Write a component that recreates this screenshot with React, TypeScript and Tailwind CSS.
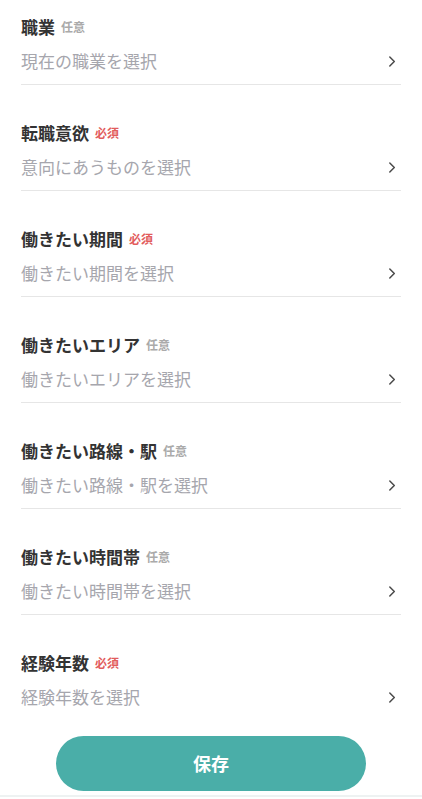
import React from "react";

type Field = {
  label: string;
  required: boolean;
  placeholder: string;
};

const fields: Field[] = [
  { label: "職業", required: false, placeholder: "現在の職業を選択" },
  { label: "転職意欲", required: true, placeholder: "意向にあうものを選択" },
  { label: "働きたい期間", required: true, placeholder: "働きたい期間を選択" },
  { label: "働きたいエリア", required: false, placeholder: "働きたいエリアを選択" },
  { label: "働きたい路線・駅", required: false, placeholder: "働きたい路線・駅を選択" },
  { label: "働きたい時間帯", required: false, placeholder: "働きたい時間帯を選択" },
  { label: "経験年数", required: true, placeholder: "経験年数を選択" },
];

const Chevron = () => (
  <svg width="8" height="13" viewBox="0 0 8 13" fill="none" className="shrink-0">
    <path d="M1.8 2L6.3 6.5L1.8 11" stroke="#4a4a4a" strokeWidth="1.5" strokeLinecap="round" strokeLinejoin="round" />
  </svg>
);

const App: React.FC = () => {
  return (
    <div
      className="min-h-[799px] w-full bg-white flex flex-col"
      style={{ fontFamily: '"Noto Sans CJK JP", "Noto Sans", sans-serif' }}
    >
      <div className="flex flex-col px-[21px]">
        {fields.map((f, idx) => (
          <div
            key={f.label}
            className={`flex flex-col ${idx === 0 ? "pt-[15px]" : "pt-[36px]"} pb-[11px] ${
              idx === fields.length - 1 ? "" : "border-b border-[#e6e6e6]"
            }`}
          >
            <div className="flex items-center gap-[6px] h-[24px]">
              <span className="text-[17px] font-bold text-[#333333] leading-[24px]">{f.label}</span>
              <span
                className={`text-[12px] font-bold leading-[24px] ${
                  f.required ? "text-[#e25c5c]" : "text-[#aaaaaa]"
                }`}
              >
                {f.required ? "必須" : "任意"}
              </span>
            </div>
            <div className="flex items-center justify-between h-[24px] mt-[10px] pr-[5px]">
              <span className="text-[17px] text-[#a6a6ad] leading-[24px]">{f.placeholder}</span>
              <Chevron />
            </div>
          </div>
        ))}
      </div>
      <div className="flex flex-col pt-[16px] pb-[4px] border-b-2 border-[#eef2f2]">
        <button className="mx-auto w-[310px] h-[55px] rounded-full bg-[#4aaea8] text-white text-[18px] font-bold">
          保存
        </button>
      </div>
    </div>
  );
};

export default App;
